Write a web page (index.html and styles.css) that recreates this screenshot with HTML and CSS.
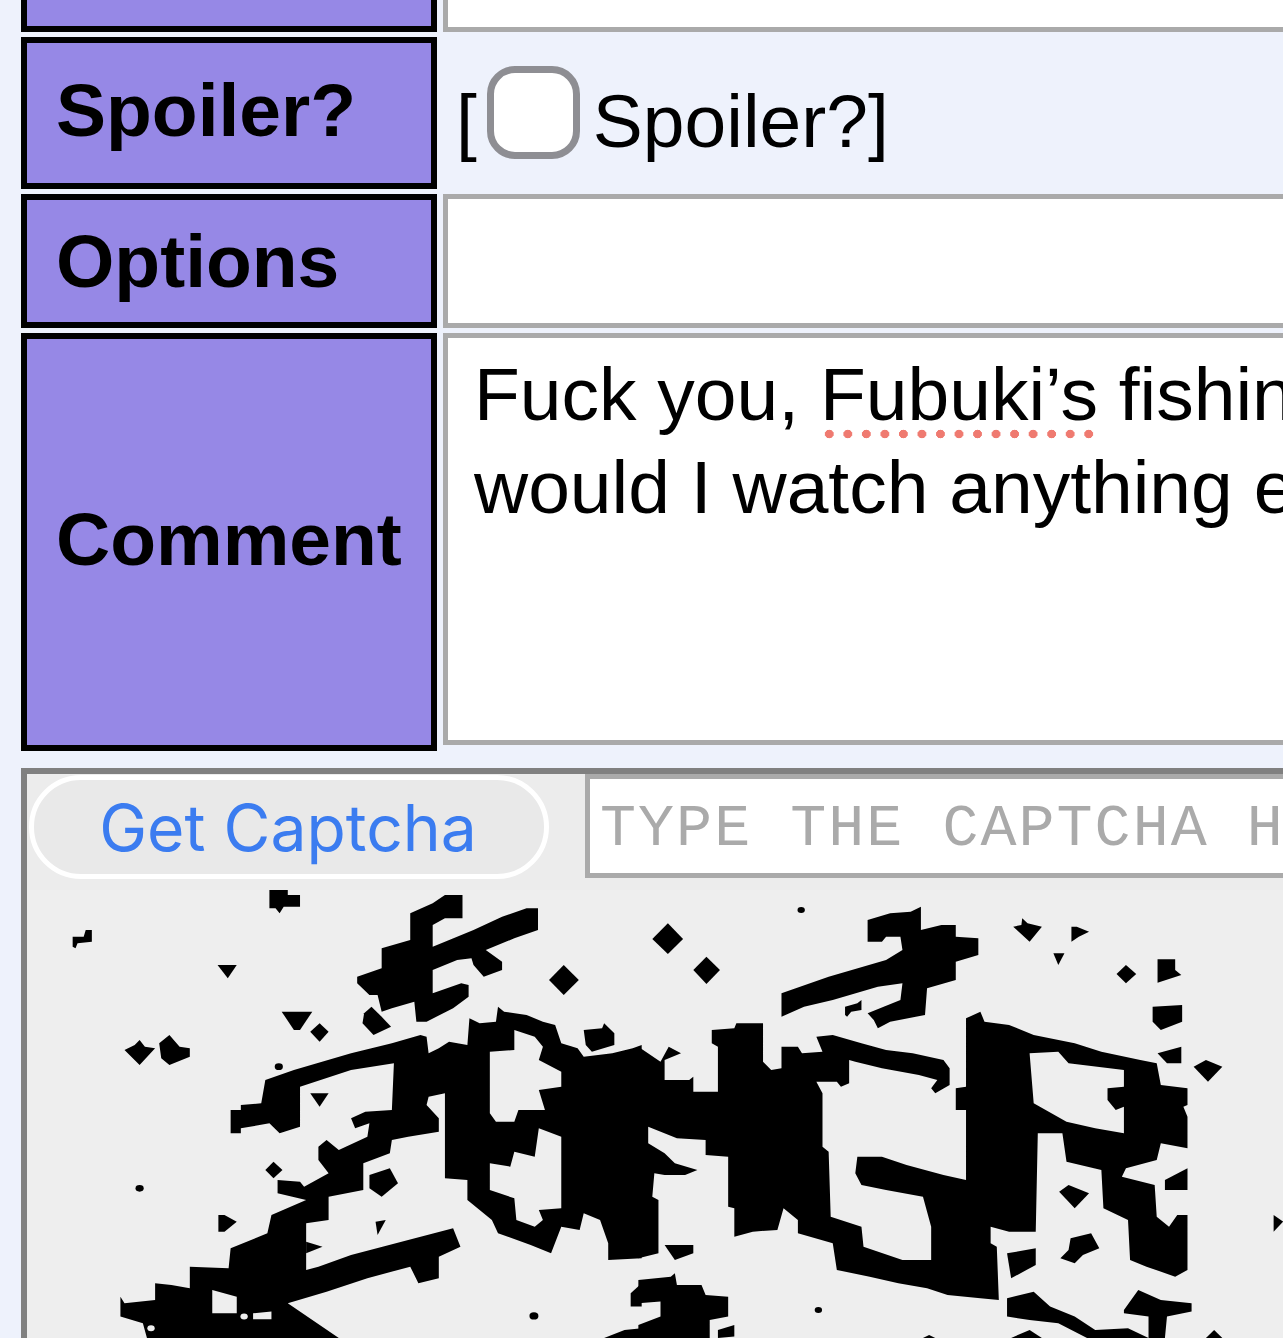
FILE: index.html
```html
<!DOCTYPE html>
<html lang="en">
<head>
    <meta charset="UTF-8">
    <meta name="viewport" content="width=device-width, initial-scale=1.0">
    <title>Post form</title>
    <link rel="stylesheet" href="styles.css">
</head>
<body>
    <form class="post-form">
        <div class="label"></div>
        <div class="field"></div>

        <div class="label label-raised">Spoiler?</div>
        <div class="spoiler-cell">[<input type="checkbox" class="spoiler-check"><span>Spoiler?]</span></div>

        <div class="label">Options</div>
        <div class="field"></div>

        <div class="label label-raised">Comment</div>
        <div class="field comment">
            <div>Fuck you, <span class="misspelled">Fubuki’s</span> fishing</div>
            <div>would I watch anything else</div>
        </div>
    </form>

    <div class="captcha">
        <div class="captcha-row">
            <button type="button" class="captcha-button">Get Captcha</button>
            <input type="text" class="captcha-input" placeholder="TYPE THE CAPTCHA HERE">
        </div>
        <!-- captcha picture, traced by hand -->
        <svg class="captcha-image" viewBox="27 890 1256 448" width="1256" height="448">
            <rect x="27" y="890" width="1256" height="448" fill="#eeeeee"/>
            <g transform="translate(0 880) scale(.4082 .3333)">
                <path fill-rule="evenodd" d="M565 690L590 690 590 675 640 670 650 600 720 570 860 520 960 490 1030 465 1045 470 1050 520 1075 505 1100 485 1145 495 1150 415 1175 430 1215 425 1220 380 1235 395 1290 405 1330 425 1360 435 1375 490 1415 505 1430 530 1500 520 1550 505 1572 495 1572 1135 1490 1140 1490 1090 1470 1020 1430 1000 1420 1050 1375 1040 1350 1120 1300 1095 1220 1060 1205 1020 1145 960 1145 900 1090 895 1090 640 1050 650 1045 675 1075 715 1075 755 1000 770 960 780 955 820 890 850 890 930 805 950 805 1020 750 1030 750 1170 780 1160 860 1125 1000 1080 1110 1045 1128 1100 1075 1130 1075 1195 1025 1210 1005 1160 900 1195 800 1235 705 1270 830 1374 360 1374 350 1330 295 1310 295 1250 305 1270 380 1260 380 1210 420 1215 465 1225 465 1160 560 1165 565 1105 655 1060 665 1005 750 960 680 940 680 900 735 905 745 920 805 880 780 840 780 800 800 780 830 810 900 770 905 730 870 745 860 715 895 695 960 690 965 550 860 570 735 620 735 740 685 760 660 730 590 745 590 760 565 760Z
                    M1200 515L1260 510 1260 450 1310 470 1330 500 1320 540 1375 575 1375 620 1320 630 1335 690 1270 690 1260 725 1215 725 1200 700Z
                    M1200 850L1250 860 1260 815 1310 830 1320 745 1375 770 1375 985 1320 990 1330 1020 1310 1040 1265 1020 1260 955 1200 930Z
                    M520 1230L580 1250 580 1300 520 1300Z
                    M620 1300L665 1295 665 1318 620 1318Z"/>
                <path d="M1005 100L1060 70 1090 45 1133 45 1133 115 1090 115 1060 135 1060 200 1090 185 1160 150 1230 110 1290 85 1318 85 1318 150 1260 175 1190 210 1230 245 1230 270 1185 290 1160 255 1155 235 1120 240 1060 270 1060 340 1130 310 1148 315 1148 350 1110 385 1045 425 1020 425 1015 365 960 385 935 395 925 345 905 345 875 310 875 290 935 265 935 205 1005 180Z"/>
                <path d="M660 30L705 30 705 45 735 45 735 80 695 80 685 100 675 85 660 85Z"/>
                <path d="M178 170L205 170 210 150 225 150 225 185 190 190 185 205 178 200Z"/>
                <path d="M533 255L580 255 558 295Z"/>
                <path d="M690 395L765 395 735 450 720 450Z"/>
                <path d="M783 430L805 455 783 485 760 455Z"/>
                <path d="M305 510L330 495 342 480 355 500 380 505 342 555Z"/>
                <path d="M390 490L415 465 440 500 465 505 465 530 415 555 395 535Z"/>
                <path d="M1381 255L1418 300 1381 345 1345 300Z"/>
                <path d="M910 380L935 410 958 440 915 465 888 430 892 400Z"/>
                <path d="M1430 450L1475 445 1480 430 1505 460 1505 495 1450 515 1435 495Z"/>
                <path d="M760 640L805 640 783 680Z"/>
                <path d="M650 870L670 845 692 870 670 895Z"/>
                <path d="M905 885L955 865 975 910 935 950 905 925Z"/>
                <path d="M535 1005L550 1005 580 1025 550 1055 535 1055Z"/>
                <path d="M920 1025L945 1020 925 1065Z"/>
                <path d="M750 1085L790 1100 750 1120Z"/>
                <path d="M1545 1240L1572 1210 1572 1280 1545 1280Z"/>
                <path d="M1480 1374L1530 1350 1572 1345 1572 1374Z"/>
                <ellipse cx="342" cy="925" rx="10" ry="10"/>
                <ellipse cx="683" cy="560" rx="10" ry="10"/>
                <ellipse cx="1308" cy="1308" rx="11" ry="11"/>
                <ellipse cx="598" cy="1310" rx="9" ry="9" fill="#eeeeee"/>
                <ellipse cx="370" cy="1345" rx="9" ry="9" fill="#eeeeee"/>
            </g>
            <g transform="translate(640 880) scale(.4101 .3333)">
                <path d="M-4 500L50 545 70 500 100 520 60 540 60 600 120 600 130 590 130 635 190 635 190 500 175 490 175 450 230 445 235 430 300 430 300 545 320 570 345 565 345 500 385 500 395 520 445 515 430 470 470 465 540 490 600 510 665 520 740 540 755 565 755 615 720 640 710 625 725 600 680 585 590 565 525 545 510 540 510 610 490 620 480 605 430 605 445 640 445 800 460 815 465 1010 540 1040 545 1100 640 1140 710 1140 710 1040 690 950 600 930 540 915 525 880 530 830 590 830 650 855 740 885 795 900 795 690 770 690 770 625 795 620 795 415 830 395 840 425 900 435 960 465 1060 490 1125 515 1220 540 1260 550 1270 615 1335 625 1335 675 1325 680 1335 710 1335 805 1270 790 1260 840 1185 865 1175 890 1255 915 1260 1010 1290 1040 1310 1005 1335 1005 1335 1170 1305 1190 1235 1160 1195 1140 1190 1020 1130 985 1125 870 1040 845 1030 760 970 760 965 1055 900 1055 855 1040 855 1090 870 1100 875 1260 830 1255 750 1245 700 1225 630 1210 560 1190 480 1170 470 1090 385 1060 385 1020 350 985 335 1050 275 1055 230 1070 230 985 215 980 215 830 160 825 160 780 90 775 20 740 20 790 60 820 85 850 140 870 110 885 60 885 35 880 30 950 45 960 45 1120 -4 1135Z"/>
                <path fill="#eeeeee" d="M950 520L1020 515 1045 550 1180 570 1180 620 1140 625 1140 660 1160 690 1180 680 1180 760 1110 745 1040 725 960 670Z"/>
                <path d="M555 120L610 100 660 95 685 80 685 150 735 135 770 135 770 170 825 175 825 225 770 245 770 300 700 325 695 405 610 425 580 445 570 420 555 400 635 360 640 310 580 320 470 360 400 380 345 410 345 340 460 290 600 240 640 210 635 170 600 170 590 185 555 185Z"/>
                <path d="M68 130L105 177 68 222 30 177Z"/>
                <path d="M162 230L195 270 162 312 130 270Z"/>
                <path d="M500 380L530 370 540 360 540 390 515 395 505 410 500 405Z"/>
                <path d="M910 140L930 135 932 115 945 130 980 140 950 185Z"/>
                <path d="M1052 140L1065 140 1095 155 1070 170 1052 185Z"/>
                <path d="M1008 220L1035 220 1020 255Z"/>
                <path d="M1185 255L1210 282 1185 310 1162 282Z"/>
                <path d="M1262 238L1305 238 1305 270 1320 285 1262 308Z"/>
                <path d="M1250 380L1322 375 1322 425 1270 450 1250 425Z"/>
                <path d="M1262 520L1320 500 1320 550 1285 550Z"/>
                <path d="M1350 560L1380 540 1420 560 1385 605Z"/>
                <path d="M1280 900L1335 865 1335 930 1280 930Z"/>
                <path d="M1545 1005L1568 1025 1545 1055Z"/>
                <path d="M1022 935L1045 915 1095 940 1060 985Z"/>
                <path d="M1050 1075L1100 1060 1120 1105 1080 1125 1060 1150 1025 1135 1045 1110Z"/>
                <path d="M895 1120L965 1105 965 1155 905 1195Z"/>
                <path d="M60 1095L130 1095 130 1120 85 1140Z"/>
                <path fill-rule="evenodd" d="M-4 1200L75 1190 85 1180 90 1215 150 1215 160 1245 215 1250 215 1310 170 1320 170 1374 -4 1374ZM-4 1270L50 1265 50 1310 -4 1335Z"/>
                <path d="M190 1350L230 1335 230 1370 190 1374Z"/>
                <path d="M895 1255L960 1235 1000 1280 1060 1310 1110 1350 1190 1345 1240 1374 1090 1374 1020 1330 950 1320 895 1310Z"/>
                <path d="M905 1374L950 1350 980 1374Z"/>
                <path d="M1180 1290L1215 1230 1270 1260 1345 1270 1345 1295 1285 1310 1280 1374 1240 1374 1240 1310 1180 1300Z"/>
                <path d="M1380 1374L1400 1350 1420 1374Z"/>
                <path d="M690 1374L705 1365 720 1374Z"/>
                <ellipse cx="393" cy="90" rx="9" ry="9"/>
                <ellipse cx="435" cy="1290" rx="9" ry="9"/>
            </g>
        </svg>
    </div>
</body>
</html>
```

FILE: styles.css
```css
html, body {
    margin: 0;
    height: 1338px;
    overflow: hidden;
}
body {
    background-color: #eef2fc;
    font-family: "Liberation Sans", Arial, sans-serif;
    font-size: 75px;
    color: #000;
}
.post-form {
    display: grid;
    width: 1500px;
    margin: -68px 0 0 21px;
    grid-template-columns: 416px 1fr;
    grid-template-rows: 100px 152px 134px 418px;
    column-gap: 6px;
    row-gap: 5px;
}
.label {
    display: flex;
    align-items: center;
    box-sizing: border-box;
    padding-left: 29px;
    background-color: #9688e6;
    border: 6px solid #000;
    font-weight: bold;
}
.label-raised {
    padding-bottom: 6px;
}
.field {
    box-sizing: border-box;
    background-color: #fff;
    border: 5.5px solid #aaa;
}
.spoiler-cell {
    display: flex;
    align-items: center;
    padding: 16px 0 0 13px;
    line-height: 1;
}
.spoiler-check {
    appearance: none;
    box-sizing: border-box;
    width: 93px;
    height: 93px;
    margin: -18px 13px 0 10px;
    background-color: #fff;
    border: 7.5px solid #8e8e93;
    border-radius: 28px;
}
.comment {
    height: 412px;
    padding: 10px 26px;
    line-height: 93px;
    white-space: nowrap;
}
.misspelled {
    padding-bottom: 3px;
    background-image: radial-gradient(circle 4.6px at center, #ef7a70 90%, transparent 100%);
    background-size: 18.2px 10px;
    background-repeat: round no-repeat;
    background-position: left bottom;
}
.captcha {
    box-sizing: border-box;
    width: 1500px;
    height: 600px;
    margin: 17px 0 0 21px;
    background-color: #ececec;
    border: 6px solid #808080;
}
.captcha-row {
    display: flex;
    align-items: flex-start;
    height: 116px;
}
.captcha-button {
    box-sizing: border-box;
    width: 520px;
    height: 104px;
    margin: 1px 36px 0 2px;
    padding-right: 8px;
    background-color: #e9e9e9;
    border: 5px solid #fff;
    border-radius: 52px;
    font-family: Inter, sans-serif;
    font-size: 64.2px;
    color: #3b7cf0;
}
.captcha-input {
    box-sizing: border-box;
    width: 900px;
    height: 104px;
    padding: 5px 10px 0;
    border: 5.5px solid #aaa;
    border-radius: 0;
    font-family: "Liberation Mono", monospace;
    font-size: 60px;
    letter-spacing: 2.04px;
}
.captcha-input::placeholder {
    color: #aaa;
}
.captcha-image {
    display: block;
}
```
